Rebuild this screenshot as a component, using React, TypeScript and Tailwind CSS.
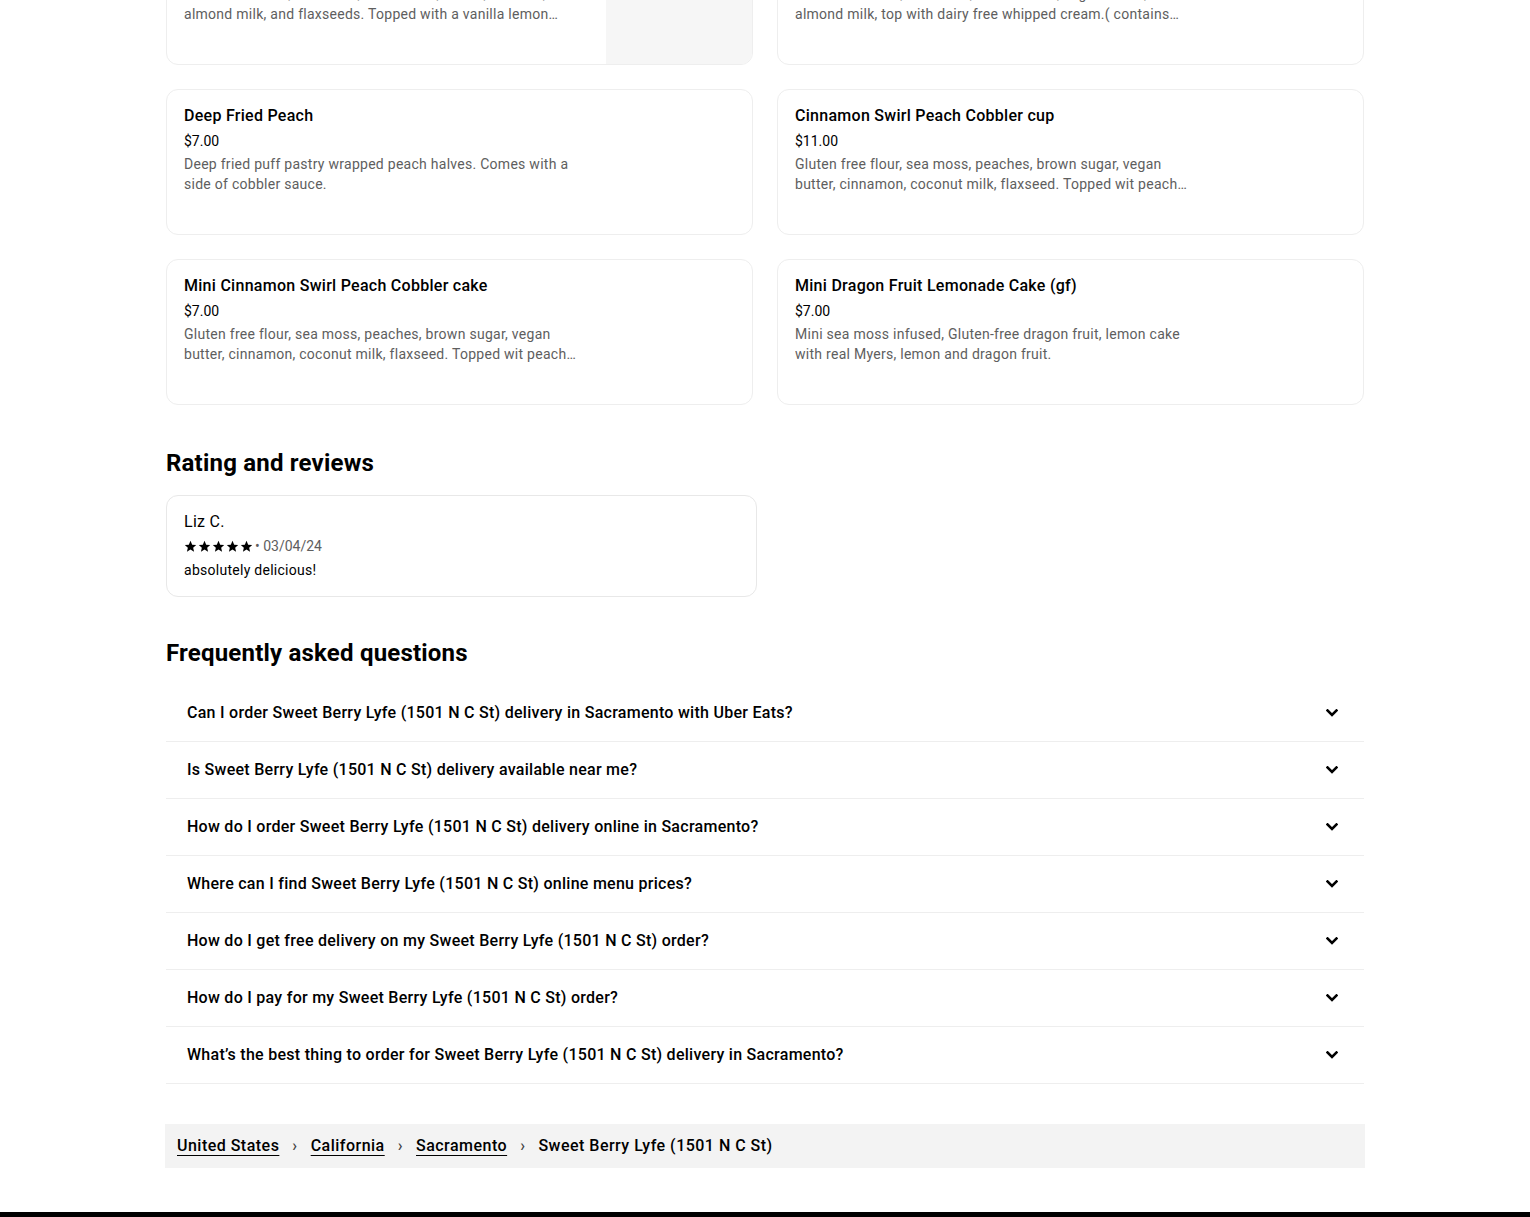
type Item = {
  name: string;
  price: string;
  desc: string;
  image?: boolean;
};

const items: Item[] = [
  {
    name: 'Lemon Blueberry Cobbler cup',
    price: '$11.00',
    desc: 'Gluten free flour, sea moss, blueberries, lemon, coconut, almond milk, and flaxseeds. Topped with a vanilla lemon…',
    image: true,
  },
  {
    name: 'Strawberry Shortcake cup',
    price: '$11.00',
    desc: 'Gluten free cake, sea moss, strawberries, vegan butter, almond milk, top with dairy free whipped cream.( contains coconut)',
  },
  {
    name: 'Deep Fried Peach',
    price: '$7.00',
    desc: 'Deep fried puff pastry wrapped peach halves. Comes with a side of cobbler sauce.',
  },
  {
    name: 'Cinnamon Swirl Peach Cobbler cup',
    price: '$11.00',
    desc: 'Gluten free flour, sea moss, peaches, brown sugar, vegan butter, cinnamon, coconut milk, flaxseed. Topped wit peach cobbler sauce and cinnamon swirl.',
  },
  {
    name: 'Mini Cinnamon Swirl Peach Cobbler cake',
    price: '$7.00',
    desc: 'Gluten free flour, sea moss, peaches, brown sugar, vegan butter, cinnamon, coconut milk, flaxseed. Topped wit peach cobbler sauce and cinnamon swirl.',
  },
  {
    name: 'Mini Dragon Fruit Lemonade Cake (gf)',
    price: '$7.00',
    desc: 'Mini sea moss infused, Gluten-free dragon fruit, lemon cake with real Myers, lemon and dragon fruit.',
  },
];

const faqs = [
  'Can I order Sweet Berry Lyfe (1501 N C St) delivery in Sacramento with Uber Eats?',
  'Is Sweet Berry Lyfe (1501 N C St) delivery available near me?',
  'How do I order Sweet Berry Lyfe (1501 N C St) delivery online in Sacramento?',
  'Where can I find Sweet Berry Lyfe (1501 N C St) online menu prices?',
  'How do I get free delivery on my Sweet Berry Lyfe (1501 N C St) order?',
  'How do I pay for my Sweet Berry Lyfe (1501 N C St) order?',
  'What’s the best thing to order for Sweet Berry Lyfe (1501 N C St) delivery in Sacramento?',
];

function Star() {
  return (
    <svg viewBox="0 0 24 24" className="w-[13px] h-[13px]" fill="#000">
      <path d="M12 1.5l3.1 7.1 7.4.6-5.6 4.9 1.7 7.4L12 17.6l-6.6 3.9 1.7-7.4L1.5 9.2l7.4-.6z" />
    </svg>
  );
}

function Chevron() {
  return (
    <svg viewBox="0 0 12 8" className="w-[12px] h-[8px]" fill="none">
      <path d="M1.5 1.5L6 6l4.5-4.5" stroke="#000" strokeWidth="2.6" strokeLinecap="square" />
    </svg>
  );
}

function MenuCard({ item }: { item: Item }) {
  return (
    <div className="flex h-[146px] rounded-xl border border-[#eeeeee] bg-white overflow-hidden">
      <div className="flex-1 pl-[17px] pr-4 pt-[15px] min-w-0">
        <div className="text-[16px] leading-[22px] font-medium text-black">{item.name}</div>
        <div className="mt-[4px] text-[14px] leading-[20px] tracking-normal text-black">{item.price}</div>
        <div className="mt-[3px] max-w-[404px] text-[14px] leading-[20px] text-[#5e5e5e] line-clamp-2">
          {item.desc}
        </div>
      </div>
      {item.image && <div className="w-[146px] h-full bg-[#f6f6f6]" />}
    </div>
  );
}

export default function App() {
  return (
    <div className="min-h-screen bg-white font-['Roboto',sans-serif] tracking-[0.017em] text-black">
      <div className="w-[1198px] ml-[166px]">
        <div className="grid grid-cols-2 gap-x-6 gap-y-6 -mt-[81px]">
          {items.map((item) => (
            <MenuCard key={item.name} item={item} />
          ))}
        </div>

        <h2 className="mt-[42px] text-[24px] leading-[32px] font-bold tracking-[0.2px]">Rating and reviews</h2>
        <div className="mt-[16px] w-[591px] h-[102px] rounded-xl border border-[#e8e8e8] pl-[17px] pr-4 pt-[15px]">
          <div className="text-[16px] leading-[22px]">Liz C.</div>
          <div className="mt-[3px] flex items-center gap-[1px] text-[14px] leading-[20px] text-[#5e5e5e]">
            <Star />
            <Star />
            <Star />
            <Star />
            <Star />
            <span className="ml-[1px] tracking-normal">• 03/04/24</span>
          </div>
          <div className="mt-[4px] text-[14px] leading-[20px]">absolutely delicious!</div>
        </div>

        <h2 className="mt-[40px] text-[24px] leading-[32px] font-bold tracking-[0.2px]">Frequently asked questions</h2>
        <div className="mt-[16px]">
          {faqs.map((q) => (
            <div
              key={q}
              className="flex items-center justify-between h-[57px] pl-[21px] pr-[26px] border-b border-[#eeeeee]"
            >
              <span className="text-[16px] leading-[22px] font-medium">{q}</span>
              <Chevron />
            </div>
          ))}
        </div>

        <div className="mt-[40px] -ml-[1px] w-[1200px] h-[44px] bg-[#f3f3f3] flex items-center px-3 text-[16px] leading-[22px] font-medium tracking-[0.03em]">
          <a className="underline underline-offset-[4px] decoration-1">United States</a>
          <span className="mx-[13px] text-[#444]">›</span>
          <a className="underline underline-offset-[4px] decoration-1">California</a>
          <span className="mx-[13px] text-[#444]">›</span>
          <a className="underline underline-offset-[4px] decoration-1">Sacramento</a>
          <span className="mx-[13px] text-[#444]">›</span>
          <span>Sweet Berry Lyfe (1501 N C St)</span>
        </div>
      </div>
      <div className="mt-[44px] h-[200px] bg-black" />
    </div>
  );
}
